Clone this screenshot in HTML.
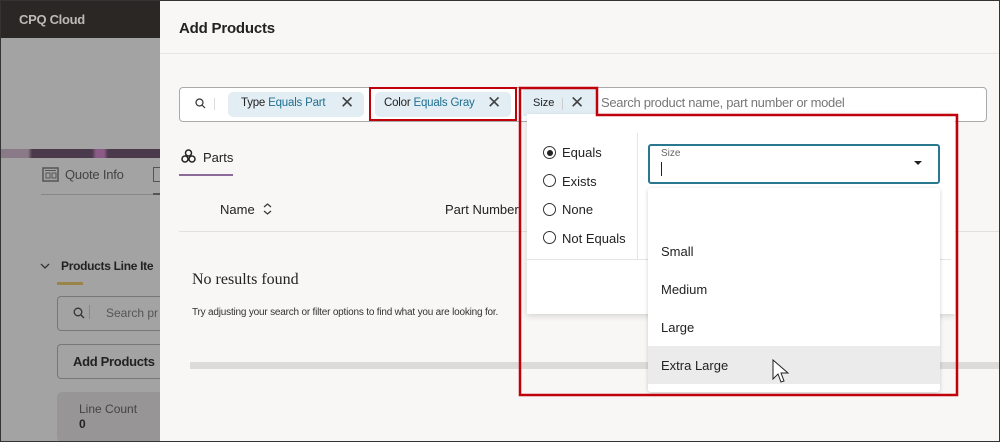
<!DOCTYPE html><html><head><style>
*{box-sizing:border-box;margin:0;padding:0}
body{width:1000px;height:442px;overflow:hidden;font-family:"Liberation Sans",sans-serif;position:relative;background:#a3a3a3;color:#222}
.a{position:absolute}
</style></head><body>
<div class="a" style="left:0;top:0;width:160px;height:38px;background:#2a2725"></div>
<div class="a" style="left:19px;top:12px;color:#bdbab6;font-size:13px;font-weight:bold;letter-spacing:-.3px">CPQ Cloud</div>
<div class="a" style="left:0;top:149px;width:160px;height:9px;background:linear-gradient(90deg,#8a7a88 0,#8a7a88 28px,#4a3a4c 32px,#4a3a4c 92px,#8a5b86 96px,#8a5b86 104px,#4a3a4c 108px)"></div>
<svg class="a" style="left:42px;top:167px" width="17" height="15"><rect x="1" y="1" width="15" height="13" fill="none" stroke="#555" stroke-width="1.5"/><rect x="4" y="6" width="4" height="5" fill="none" stroke="#555"/><rect x="10" y="6" width="4" height="5" fill="none" stroke="#555"/><line x1="3" y1="3.5" x2="14" y2="3.5" stroke="#555"/></svg>
<div class="a" style="left:65px;top:167px;font-size:13px;color:#444;letter-spacing:-.2px">Quote Info</div>
<div class="a" style="left:153px;top:167px;width:7px;height:15px;border:1.5px solid #555;border-right:none"></div>
<div class="a" style="left:41px;top:194px;width:119px;height:1px;background:#888"></div>
<div class="a" style="left:153px;top:193px;width:7px;height:2px;background:#555"></div>
<svg class="a" style="left:40px;top:263px" width="10" height="7"><path d="M1 1 L5 5 L9 1" fill="none" stroke="#333" stroke-width="1.3"/></svg>
<div class="a" style="left:61px;top:259px;font-size:12px;font-weight:bold;color:#222;white-space:nowrap;letter-spacing:-.3px">Products Line Ite</div>
<div class="a" style="left:57px;top:282px;width:26px;height:3px;background:#9a844a"></div>
<div class="a" style="left:57px;top:296px;width:110px;height:35px;border:1px solid #777;border-radius:4px"></div>
<svg class="a" style="left:73px;top:307px" width="12" height="12"><circle cx="5" cy="5" r="3.8" fill="none" stroke="#333" stroke-width="1.3"/><line x1="8" y1="8" x2="11" y2="11" stroke="#333" stroke-width="1.3"/></svg>
<div class="a" style="left:89px;top:305px;width:1px;height:14px;background:#888"></div>
<div class="a" style="left:106px;top:306px;font-size:12px;color:#555">Search pr</div>
<div class="a" style="left:57px;top:344px;width:110px;height:35px;border:1px solid #777;border-radius:4px"></div>
<div class="a" style="left:73px;top:354px;font-size:13px;font-weight:bold;color:#222;letter-spacing:-.3px">Add Products</div>
<div class="a" style="left:57px;top:392px;width:110px;height:50px;background:#979595;border-radius:5px"></div>
<div class="a" style="left:79px;top:402px;font-size:12px;color:#444">Line Count</div>
<div class="a" style="left:79px;top:417px;font-size:12px;font-weight:bold;color:#222">0</div>

<div class="a" style="left:160px;top:0;width:840px;height:442px;background:#f8f7f5"></div>
<div class="a" style="left:179px;top:20px;font-size:15px;font-weight:bold;letter-spacing:-.2px">Add Products</div>
<div class="a" style="left:160px;top:53px;width:840px;height:1px;background:#e8e6e3"></div>
<div class="a" style="left:179px;top:87px;width:808px;height:35px;border:1px solid #aaa;border-radius:4px;background:#fff"></div>
<svg class="a" style="left:195px;top:98px" width="11" height="11"><circle cx="4.5" cy="4.5" r="3.5" fill="none" stroke="#333" stroke-width="1.2"/><line x1="7" y1="7" x2="10" y2="10" stroke="#333" stroke-width="1.2"/></svg>
<div class="a" style="left:214px;top:98px;width:1px;height:12px;background:#ddd"></div>
<div class="a" style="left:228px;top:92px;width:136px;height:25px;background:#e2eef4;border-radius:5px"></div>
<div class="a" style="left:241px;top:97px;font-size:11.5px;white-space:nowrap;letter-spacing:-.2px">Type <span style="color:#1f6f8f">Equals Part</span></div>
<div class="a" style="left:340px;top:93px;font-size:17px;color:#444">✕</div>
<div class="a" style="left:369px;top:87px;width:148px;height:34px;border:2px solid #c0000a"></div>
<div class="a" style="left:375px;top:92px;width:136px;height:25px;background:#e2eef4;border-radius:5px"></div>
<div class="a" style="left:384px;top:97px;font-size:11.5px;white-space:nowrap;letter-spacing:-.2px">Color <span style="color:#1f6f8f">Equals Gray</span></div>
<div class="a" style="left:487px;top:93px;font-size:17px;color:#444">✕</div>
<div class="a" style="left:523px;top:88px;width:73px;height:28px;background:#e2eef4"></div>
<div class="a" style="left:533px;top:97px;font-size:11px">Size</div>
<div class="a" style="left:562px;top:98px;width:1px;height:12px;background:#ccc"></div>
<div class="a" style="left:570px;top:93px;font-size:17px;color:#444">✕</div>
<div class="a" style="left:601px;top:95px;font-size:13px;color:#777;white-space:nowrap;letter-spacing:-.3px">Search product name, part number or model</div>

<svg class="a" style="left:180px;top:149px" width="17" height="15"><circle cx="8.5" cy="4" r="3" fill="none" stroke="#222" stroke-width="1.5"/><circle cx="5" cy="10" r="3" fill="none" stroke="#222" stroke-width="1.5"/><circle cx="12" cy="10" r="3" fill="none" stroke="#222" stroke-width="1.5"/></svg>
<div class="a" style="left:203px;top:150px;font-size:13px">Parts</div>
<div class="a" style="left:179px;top:174px;width:54px;height:2px;background:#8a6b9a"></div>
<div class="a" style="left:220px;top:202px;font-size:13px">Name</div>
<svg class="a" style="left:263px;top:203px" width="9" height="12"><path d="M1 4 L4.5 1 L8 4 M1 8 L4.5 11 L8 8" fill="none" stroke="#333" stroke-width="1.2"/></svg>
<div class="a" style="left:445px;top:202px;font-size:13px">Part Number</div>
<div class="a" style="left:179px;top:231px;width:821px;height:1px;background:#e2e0dd"></div>
<div class="a" style="left:192px;top:271px;font-family:'Liberation Serif',serif;font-size:16px">No results found</div>
<div class="a" style="left:192px;top:307px;font-size:10px;color:#333;white-space:nowrap;letter-spacing:-.2px">Try adjusting your search or filter options to find what you are looking for.</div>
<div class="a" style="left:190px;top:362px;width:810px;height:7px;background:#dcdbd9"></div>

<div class="a" style="left:527px;top:114px;width:428px;height:200px;background:#fff;box-shadow:0 2px 6px rgba(0,0,0,.15)"></div>
<div class="a" style="left:527px;top:259px;width:424px;height:1px;background:#e5e5e5"></div>
<div class="a" style="left:637px;top:133px;width:1px;height:127px;background:#e5e5e5"></div>
<div class="a" style="left:543px;top:146px;width:13px;height:13px;border:1.5px solid #333;border-radius:50%"></div>
<div class="a" style="left:546.5px;top:149.5px;width:6px;height:6px;background:#222;border-radius:50%"></div>
<div class="a" style="left:543px;top:174px;width:13px;height:13px;border:1.5px solid #333;border-radius:50%"></div>
<div class="a" style="left:543px;top:203px;width:13px;height:13px;border:1.5px solid #333;border-radius:50%"></div>
<div class="a" style="left:543px;top:231px;width:13px;height:13px;border:1.5px solid #333;border-radius:50%"></div>
<div class="a" style="left:562px;top:145px;font-size:13px">Equals</div>
<div class="a" style="left:562px;top:174px;font-size:13px">Exists</div>
<div class="a" style="left:562px;top:202px;font-size:13px">None</div>
<div class="a" style="left:562px;top:231px;font-size:13px">Not Equals</div>
<div class="a" style="left:648px;top:144px;width:292px;height:40px;border:2px solid #2a7890;border-radius:3px;background:#fff"></div>
<div class="a" style="left:661px;top:148px;font-size:10px;color:#666">Size</div>
<div class="a" style="left:661px;top:162px;width:1px;height:14px;background:#222"></div>
<div class="a" style="left:914px;top:161px;width:0;height:0;border-left:4px solid transparent;border-right:4px solid transparent;border-top:4px solid #222"></div>
<div class="a" style="left:648px;top:188px;width:292px;height:204px;background:#fff;border-radius:3px;box-shadow:0 1px 4px rgba(0,0,0,.18)"></div>
<div class="a" style="left:648px;top:346px;width:292px;height:38px;background:#ebebeb"></div>
<div class="a" style="left:661px;top:244px;font-size:13px">Small</div>
<div class="a" style="left:661px;top:282px;font-size:13px">Medium</div>
<div class="a" style="left:661px;top:320px;font-size:13px">Large</div>
<div class="a" style="left:661px;top:358px;font-size:13px">Extra Large</div>
<svg class="a" style="left:772px;top:359px" width="20" height="28" viewBox="0 0 20 28"><path d="M1 1 L1 20 L6 15 L9 23 L12 22 L9 14 L16 14 Z" fill="#fff" stroke="#222" stroke-width="1"/></svg>

<svg class="a" style="left:0;top:0" width="1000" height="442"><path d="M520 395 L520 88 L597 88 L597 115 L957 115 L957 395 Z" fill="none" stroke="#c0000a" stroke-width="2.5"/></svg>
<div class="a" style="left:0;top:0;width:1000px;height:442px;border:1px solid #333"></div>
</body></html>
